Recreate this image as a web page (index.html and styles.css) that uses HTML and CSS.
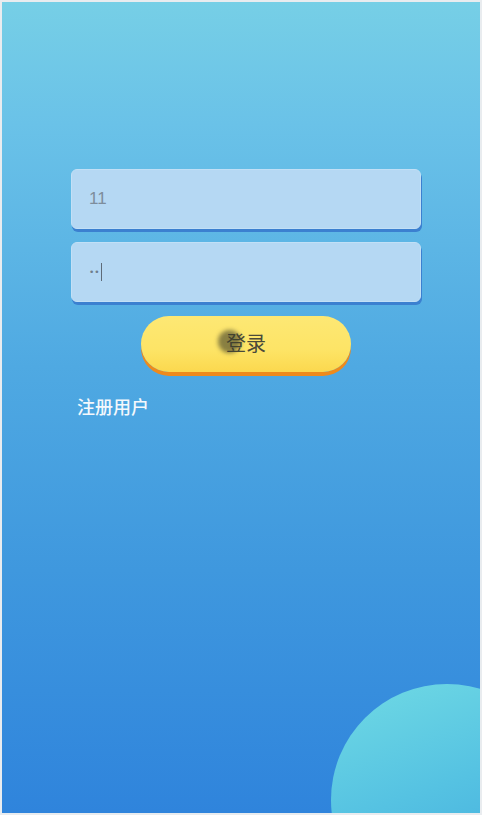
FILE: index.html
```html
<!DOCTYPE html>
<html lang="zh">
<head>
<meta charset="utf-8">
<title>登录</title>
<link rel="stylesheet" href="styles.css">
</head>
<body>
<div class="screen">
  <form class="login">
    <div class="field"><span class="value">11</span></div>
    <div class="field"><span class="value dots">••</span><span class="caret"></span></div>
    <div class="btn-row">
      <button type="button" class="btn">登录<span class="touch"></span></button>
    </div>
    <a class="register">注册用户</a>
  </form>
  <div class="bubble"></div>
</div>
</body>
</html>
```
FILE: styles.css
```css
html, body {
  margin: 0;
  padding: 0;
  background: #f2f2f2;
}
.screen {
  position: relative;
  box-sizing: border-box;
  width: 482px;
  height: 815px;
  border: 2px solid #e9ecef;
  overflow: hidden;
  background: linear-gradient(180deg, #76cfe6 0%, #6ac2e8 15%, #4fa9e2 45%, #3f98de 70%, #2f84dc 100%);
  font-family: "Noto Sans CJK SC", "Noto Sans", sans-serif;
}
.login {
  display: flex;
  flex-direction: column;
  padding: 167px 0 0 69px;
  width: 350px;
}
.field {
  box-sizing: border-box;
  height: 60px;
  margin-bottom: 13px;
  border-radius: 6px;
  background: #b5d8f3;
  border: 1px solid #c2e0f6;
  box-shadow: 1px 3px 0 #3b80d0;
  display: flex;
  align-items: center;
  padding-left: 17px;
  font-family: "Liberation Sans", Arial, sans-serif;
  font-size: 17px;
  color: #7d8d9c;
}
.dots {
  font-family: "DejaVu Sans", sans-serif;
  font-size: 9px;
  letter-spacing: 0;
  color: #6f7e8c;
}
.caret {
  display: inline-block;
  width: 1px;
  height: 18px;
  background: #5e6b78;
  margin-left: 1px;
}
.btn-row {
  display: flex;
  justify-content: center;
  padding-top: 1px;
}
.btn {
  position: relative;
  width: 210px;
  height: 56px;
  border: none;
  border-radius: 28px;
  background: linear-gradient(180deg, #fde874 0%, #fde466 60%, #fbd84e 100%);
  box-shadow: 0 4px 0 #ee8a1c;
  font-family: "Noto Sans CJK SC", sans-serif;
  font-size: 20px;
  color: #4a4a3a;
  padding: 0 0 4px 0;
}
.touch {
  position: absolute;
  left: 77px;
  top: 14px;
  width: 23px;
  height: 23px;
  border-radius: 50%;
  background: rgba(60, 60, 40, 0.6);
  filter: blur(2px);
}
.register {
  margin-top: 21px;
  padding-left: 6px;
  font-size: 18px;
  font-weight: 500;
  color: #f4f8fc;
}
.bubble {
  position: absolute;
  left: 329px;
  top: 682px;
  width: 232px;
  height: 232px;
  border-radius: 50%;
  background: linear-gradient(160deg, #70dae4 0%, #55c2e2 45%, #3aa2dc 100%);
}
```
